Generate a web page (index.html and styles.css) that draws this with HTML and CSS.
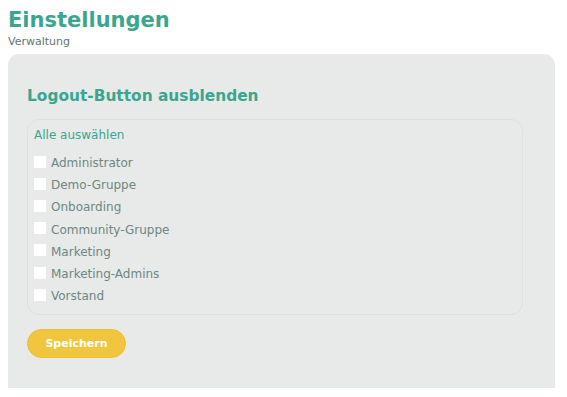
FILE: index.html
```html
<!DOCTYPE html>
<html lang="de">
<head>
<meta charset="utf-8">
<title>Einstellungen</title>
<link rel="stylesheet" href="styles.css">
</head>
<body>
<header class="page-head">
  <h1 class="title">Einstellungen</h1>
  <div class="subtitle">Verwaltung</div>
</header>
<section class="card">
  <h2 class="card-title">Logout-Button ausblenden</h2>
  <div class="group-box">
    <div class="select-all">Alle auswählen</div>
    <ul class="options">
      <li class="option"><span class="check"></span><span class="label">Administrator</span></li>
      <li class="option"><span class="check"></span><span class="label">Demo-Gruppe</span></li>
      <li class="option"><span class="check"></span><span class="label">Onboarding</span></li>
      <li class="option"><span class="check"></span><span class="label">Community-Gruppe</span></li>
      <li class="option"><span class="check"></span><span class="label">Marketing</span></li>
      <li class="option"><span class="check"></span><span class="label">Marketing-Admins</span></li>
      <li class="option"><span class="check"></span><span class="label">Vorstand</span></li>
    </ul>
  </div>
  <button class="save">Speichern</button>
</section>
</body>
</html>
```

FILE: styles.css
```css
* { box-sizing: border-box; }
html, body { margin: 0; padding: 0; background: #ffffff; }
body {
  padding: 8px 12px 0 8px;
  font-family: "DejaVu Sans", "Open Sans", sans-serif;
  height: 397px;
  overflow: hidden;
}
.page-head { display: flex; flex-direction: column; }
.title {
  margin: 0;
  font-size: 21px;
  line-height: 24px;
  font-weight: 700;
  color: #3aa68f;
}
.subtitle {
  margin-top: 3px;
  font-size: 11px;
  line-height: 14px;
  color: #5e7470;
}
.card {
  margin-top: 5px;
  background: #e7eae9;
  border-radius: 11px 11px 0 0;
  padding: 32px 32px 30px 19px;
  height: 334px;
  display: flex;
  flex-direction: column;
  align-items: flex-start;
}
.card-title {
  margin: 0;
  font-size: 15.4px;
  line-height: 20px;
  font-weight: 700;
  color: #3aa68f;
}
.group-box {
  margin-top: 13px;
  width: 100%;
  border: 1px solid #dde1e0;
  border-radius: 12px;
  padding: 6px 6px 7px 6px;
}
.select-all {
  font-size: 12px;
  line-height: 18px;
  color: #3aa68f;
}
.options {
  list-style: none;
  margin: 8px 0 0 0;
  padding: 0;
  display: flex;
  flex-direction: column;
}
.option {
  display: flex;
  align-items: center;
  gap: 5px;
  height: 22.2px;
}
.check {
  width: 12px;
  height: 12px;
  background: #ffffff;
  margin-top: -3px;
}
.label {
  font-size: 12px;
  color: #6d8782;
}
.save {
  margin-top: 14px;
  width: 99px;
  height: 30px;
  border: 1px solid #ecc030;
  border-radius: 15px;
  background: #f1c63e;
  color: #ffffff;
  font-family: inherit;
  font-weight: 700;
  font-size: 11px;
  padding: 0;
}
```
